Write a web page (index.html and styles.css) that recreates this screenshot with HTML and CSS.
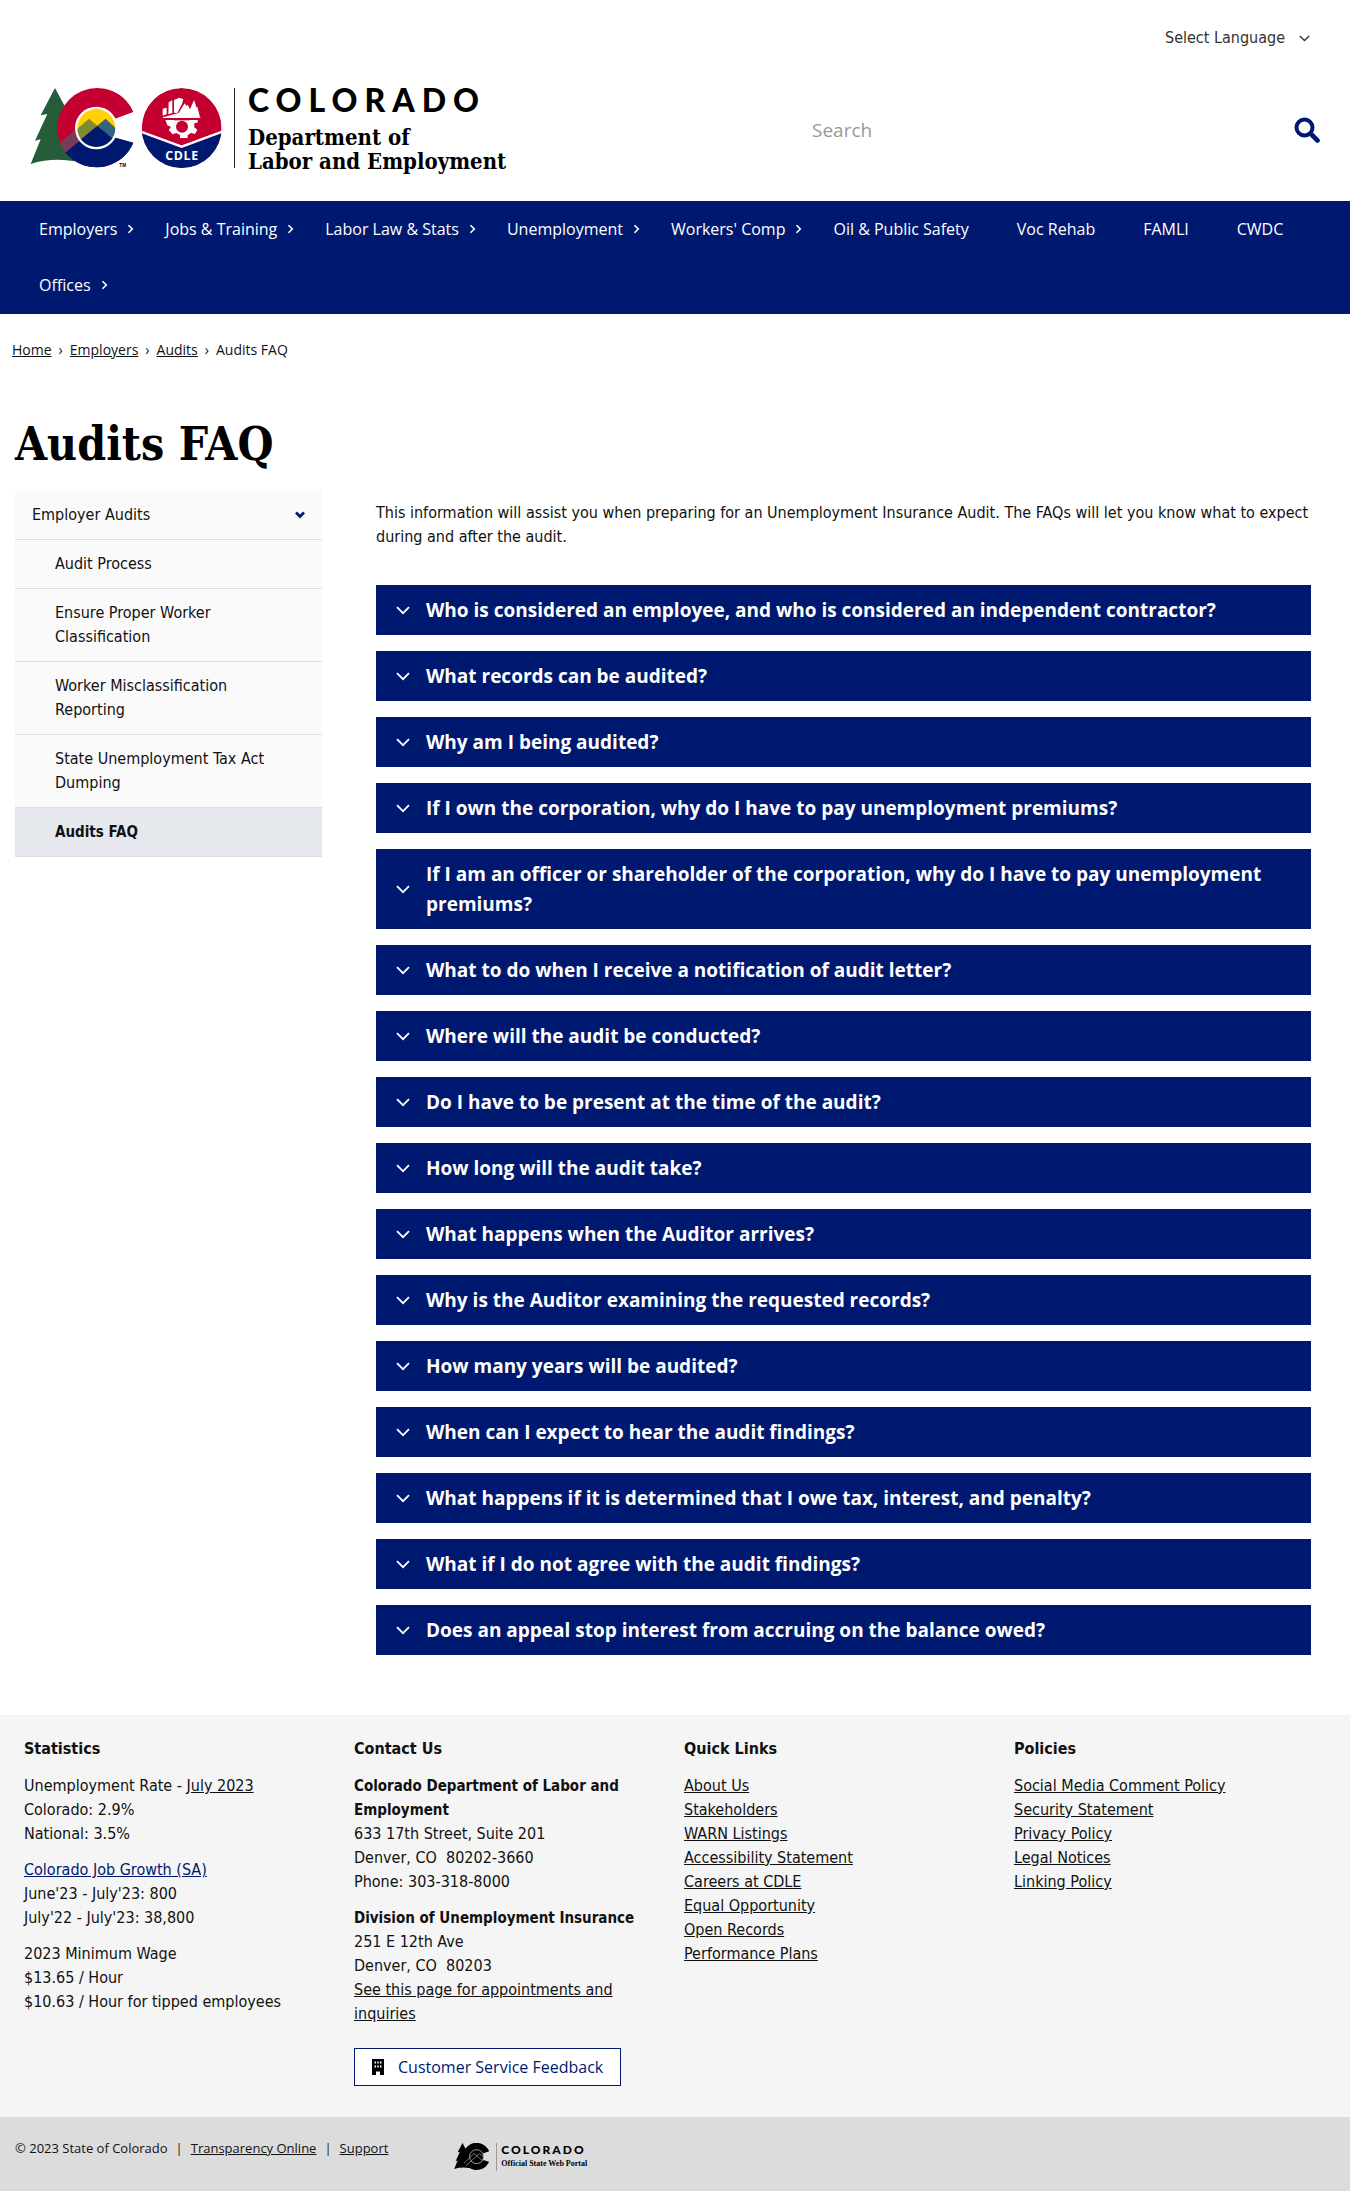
FILE: index.html
```html
<!DOCTYPE html>
<html lang="en">
<head>
<meta charset="utf-8">
<meta name="viewport" content="width=device-width, initial-scale=1">
<title>Audits FAQ | Department of Labor &amp; Employment</title>
<link rel="stylesheet" href="styles.css">
</head>
<body>
<svg class="defs" aria-hidden="true">
  <symbol id="chev-right" viewBox="0 0 7 10"><path d="M1.500 1.200 5.300 5 1.500 8.800" fill="none" stroke="currentColor" stroke-width="1.600"/></symbol>
  <symbol id="chev-down" viewBox="0 0 14 9"><path d="M1 1.200 7 7.200 13 1.200" fill="none" stroke="currentColor" stroke-width="1.800"/></symbol>
</svg>

<header class="site-header">
  <div class="language">
    <select aria-label="Language"><option>Select Language</option><option>Spanish</option></select>
    <svg class="language-icon" viewBox="0 0 14 9" aria-hidden="true"><use href="#chev-down"/></svg>
  </div>
  <div class="masthead">
    <a class="logo" href="#" aria-label="Colorado Department of Labor and Employment">
      <svg class="logo-mark" viewBox="30 24 576 246" aria-hidden="true">
        <defs><clipPath id="c-shape"><path d="M340 96A120 120 0 1 0 340 188L232 158 232 136Z"/></clipPath>
        <clipPath id="sun"><circle cx="229" cy="144" r="57"/></clipPath>
        <clipPath id="badge"><circle cx="485" cy="144" r="120"/></clipPath></defs>
        <path d="M105 24 62 106 82 102 45 182 62 178 32 252Q95 232 165 244L200 150 134 78Z" fill="#245d38"/>
        <g clip-path="url(#c-shape)">
          <circle cx="232" cy="144" r="120" fill="#c3002f"/>
          <path d="M130 222 232 137 360 175V280H130Z" fill="#001970"/>
          <path d="M105 200 180 137 200 165 131 222Z" fill="#7a3a5b"/>
        </g>
        <circle cx="229" cy="144" r="64" fill="#fff"/>
        <g clip-path="url(#sun)">
          <circle cx="229" cy="144" r="57" fill="#ffd100"/>
          <path d="M207 116 160 156V210L232 137Z" fill="#7f8a32"/>
          <path d="M232 137 257 116 295 152V196Z" fill="#35647e"/>
          <path d="M232 137 160 197V210H300V195Z" fill="#001970"/>
        </g>
        <text x="298" y="262" class="tm">TM</text>
        <g clip-path="url(#badge)">
          <circle cx="485" cy="144" r="120" fill="#c3002f"/>
          <path d="M360 156 485 200 610 156V280H360Z" fill="#001970"/>
          <path d="M360 154 485 200 610 154" fill="none" stroke="#fff" stroke-width="7"/>
        </g>
        <g fill="#fff">
          <path d="M428 86 440 83V103L428 107ZM446 67 457 61V99L445 103ZM462 60 478 53 490 58 486 72 472 99 462 98Z"/>
          <path d="M476 99 494 70 500 78 503 74 510 88 522 60 530 83 532 80 540 112H429Z"/>
          <rect x="429" y="111" width="112" height="3"/>
          <path d="M436 120H533V128L523 129V142L532 149 525 162 513 159 503 165V174H480V165L469 159 458 163 446 150 453 141 442 136Z"/>
        </g>
        <circle cx="486" cy="140" r="18" fill="#c3002f"/><path d="M462 114H508V121H462Z" fill="#c3002f"/>
        <text x="486" y="240" text-anchor="middle" class="cdle">CDLE</text>
      </svg>
      <span class="logo-text">
        <span class="logo-state">COLORADO</span>
        <span class="logo-dept">Department of<br>Labor and Employment</span>
      </span>
    </a>
    <form class="search">
      <input type="search" placeholder="Search" aria-label="Search">
      <button type="button" aria-label="Search"><svg viewBox="0 0 26 26" aria-hidden="true"><circle cx="10.500" cy="10.500" r="8" fill="none" stroke="currentColor" stroke-width="4"/><path d="M16.500 16.500 23.500 23.500" stroke="currentColor" stroke-width="4.600" stroke-linecap="round"/></svg></button>
    </form>
  </div>
</header>

<nav class="main-nav" aria-label="Main">
  <a class="sub" href="#">Employers<svg aria-hidden="true"><use href="#chev-right"/></svg></a>
  <a class="sub" href="#">Jobs &amp; Training<svg aria-hidden="true"><use href="#chev-right"/></svg></a>
  <a class="sub" href="#">Labor Law &amp; Stats<svg aria-hidden="true"><use href="#chev-right"/></svg></a>
  <a class="sub" href="#">Unemployment<svg aria-hidden="true"><use href="#chev-right"/></svg></a>
  <a class="sub" href="#">Workers' Comp<svg aria-hidden="true"><use href="#chev-right"/></svg></a>
  <a href="#">Oil &amp; Public Safety</a>
  <a href="#">Voc Rehab</a>
  <a href="#">FAMLI</a>
  <a href="#">CWDC</a>
  <a class="sub" href="#">Offices<svg aria-hidden="true"><use href="#chev-right"/></svg></a>
</nav>

<nav class="breadcrumb" aria-label="Breadcrumb">
  <a href="#">Home</a><span>›</span><a href="#">Employers</a><span>›</span><a href="#">Audits</a><span>›</span><b>Audits FAQ</b>
</nav>

<div class="page">
  <h1>Audits FAQ</h1>
  <div class="columns">
    <nav class="side-nav" aria-label="Section">
      <a class="parent" href="#">Employer Audits<svg viewBox="0 0 10 8" aria-hidden="true"><path d="M1 1.500 5 5.500 9 1.500" fill="none" stroke="#001970" stroke-width="2.800"/></svg></a>
      <a href="#">Audit Process</a>
      <a href="#">Ensure Proper Worker Classification</a>
      <a href="#">Worker Misclassification Reporting</a>
      <a href="#">State Unemployment Tax Act Dumping</a>
      <a class="active" href="#" aria-current="page">Audits FAQ</a>
    </nav>
    <main>
      <p class="intro">This information will assist you when preparing for an Unemployment Insurance Audit. The FAQs will let you know what to expect during and after the audit.</p>
      <div class="accordion">
        <button type="button"><svg aria-hidden="true"><use href="#chev-down"/></svg>Who is considered an employee, and who is considered an independent contractor?</button>
        <button type="button"><svg aria-hidden="true"><use href="#chev-down"/></svg>What records can be audited?</button>
        <button type="button"><svg aria-hidden="true"><use href="#chev-down"/></svg>Why am I being audited?</button>
        <button type="button"><svg aria-hidden="true"><use href="#chev-down"/></svg>If I own the corporation, why do I have to pay unemployment premiums?</button>
        <button type="button"><svg aria-hidden="true"><use href="#chev-down"/></svg>If I am an officer or shareholder of the corporation, why do I have to pay unemployment premiums?</button>
        <button type="button"><svg aria-hidden="true"><use href="#chev-down"/></svg>What to do when I receive a notification of audit letter?</button>
        <button type="button"><svg aria-hidden="true"><use href="#chev-down"/></svg>Where will the audit be conducted?</button>
        <button type="button"><svg aria-hidden="true"><use href="#chev-down"/></svg>Do I have to be present at the time of the audit?</button>
        <button type="button"><svg aria-hidden="true"><use href="#chev-down"/></svg>How long will the audit take?</button>
        <button type="button"><svg aria-hidden="true"><use href="#chev-down"/></svg>What happens when the Auditor arrives?</button>
        <button type="button"><svg aria-hidden="true"><use href="#chev-down"/></svg>Why is the Auditor examining the requested records?</button>
        <button type="button"><svg aria-hidden="true"><use href="#chev-down"/></svg>How many years will be audited?</button>
        <button type="button"><svg aria-hidden="true"><use href="#chev-down"/></svg>When can I expect to hear the audit findings?</button>
        <button type="button"><svg aria-hidden="true"><use href="#chev-down"/></svg>What happens if it is determined that I owe tax, interest, and penalty?</button>
        <button type="button"><svg aria-hidden="true"><use href="#chev-down"/></svg>What if I do not agree with the audit findings?</button>
        <button type="button"><svg aria-hidden="true"><use href="#chev-down"/></svg>Does an appeal stop interest from accruing on the balance owed?</button>
      </div>
    </main>
  </div>
</div>

<footer>
  <div class="footer-columns">
    <section>
      <h2>Statistics</h2>
      <p>Unemployment Rate - <a href="#">July 2023</a><br>Colorado: 2.9%<br>National: 3.5%</p>
      <p><a class="blue" href="#">Colorado Job Growth (SA)</a><br>June'23 - July'23: 800<br>July'22 - July'23: 38,800</p>
      <p>2023 Minimum Wage<br>$13.65 / Hour<br>$10.63 / Hour for tipped employees</p>
    </section>
    <section>
      <h2>Contact Us</h2>
      <p><strong>Colorado Department of Labor and Employment</strong><br>633 17th Street, Suite 201<br>Denver, CO&nbsp; 80202-3660<br>Phone: 303-318-8000</p>
      <p><strong>Division of Unemployment Insurance</strong><br>251 E 12th Ave<br>Denver, CO&nbsp; 80203<br><a href="#">See this page for appointments and inquiries</a></p>
      <a class="feedback" href="#"><svg viewBox="0 0 14 16" aria-hidden="true"><path fill="#000" fill-rule="evenodd" d="M1 0H13V16H9V12.500H5V16H1ZM3.500 2.500V4.500H5V2.500ZM6.300 2.500V4.500H7.800V2.500ZM9 2.500V4.500H10.500V2.500ZM3.500 6.500V8.500H5V6.500ZM6.300 6.500V8.500H7.800V6.500ZM9 6.500V8.500H10.500V6.500Z"/></svg>Customer Service Feedback</a>
    </section>
    <section>
      <h2>Quick Links</h2>
      <ul>
        <li><a href="#">About Us</a></li>
        <li><a href="#">Stakeholders</a></li>
        <li><a href="#">WARN Listings</a></li>
        <li><a href="#">Accessibility Statement</a></li>
        <li><a href="#">Careers at CDLE</a></li>
        <li><a href="#">Equal Opportunity</a></li>
        <li><a href="#">Open Records</a></li>
        <li><a href="#">Performance Plans</a></li>
      </ul>
    </section>
    <section>
      <h2>Policies</h2>
      <ul>
        <li><a href="#">Social Media Comment Policy</a></li>
        <li><a href="#">Security Statement</a></li>
        <li><a href="#">Privacy Policy</a></li>
        <li><a href="#">Legal Notices</a></li>
        <li><a href="#">Linking Policy</a></li>
      </ul>
    </section>
  </div>
  <div class="legal">
    <p>© 2023 State of Colorado<span>|</span><a href="#">Transparency Online</a><span>|</span><a href="#">Support</a></p>
    <a class="portal" href="#" aria-label="Colorado Official State Web Portal">
      <svg viewBox="30 24 318 246" aria-hidden="true">
        <path d="M105 24 62 106 82 102 45 182 62 178 32 252Q95 232 165 244L200 150 134 78Z"/>
        <path d="M340 96A120 120 0 1 0 340 188L232 158 232 136Z"/>
        <circle cx="229" cy="144" r="62" stroke="#bbb" stroke-width="7"/>
        <path d="M118 202 207 116 232 137 257 116 285 144M135 224 232 137 280 180" fill="none" stroke="#aaa" stroke-width="6"/>
      </svg>
      <span class="portal-text"><span class="portal-state">COLORADO</span><span class="portal-name">Official State Web Portal</span></span>
    </a>
  </div>
</footer>
</body>
</html>
```
FILE: styles.css
```css
* { box-sizing: border-box; }

body {
  margin: 0;
  background: #fff;
  color: #111;
  font: 16px/24px "DejaVu Sans Condensed", "Open Sans", sans-serif;
}

h1, h2, p, ul { margin: 0; padding: 0; }
ul { list-style: none; }
a { color: inherit; }
svg { display: block; flex: none; }
.defs { position: absolute; width: 0; height: 0; }

/* Header */
.site-header { padding: 24px 30px 31px; }
.language { display: flex; justify-content: flex-end; align-items: center; gap: 13px; padding-right: 10px; }
.language select {
  height: 28px;
  padding: 0;
  border: 0;
  background: none;
  color: #333;
  font: inherit;
  appearance: none;
}
.language-icon { width: 11px; height: 7px; color: #333; }
.masthead { display: flex; justify-content: space-between; align-items: flex-start; margin-top: 36px; }
.logo { display: flex; color: #000; text-decoration: none; }
.logo-mark { width: 192px; height: 82px; }
.tm { font: 700 14px "Liberation Sans", sans-serif; }
.cdle { font: 700 37px "Open Sans", sans-serif; fill: #fff; letter-spacing: 2px; }
.logo-text {
  display: flex;
  flex-direction: column;
  gap: 13px;
  height: 80px;
  margin-left: 12px;
  padding-left: 13px;
  border-left: 1px solid #222;
  white-space: nowrap;
}
.logo-state { font: 900 32px/24px Lato, sans-serif; letter-spacing: 7px; }
.logo-dept { font: 700 22px/24px "DejaVu Serif Condensed", "DejaVu Serif", serif; }
.search { display: flex; align-items: center; justify-content: space-between; width: 508px; margin-top: 24px; }
.search input {
  flex: 1;
  height: 36px;
  padding: 0;
  border: 0;
  background: none;
  font: 19px "Open Sans", sans-serif;
}
.search input::placeholder { color: #999; opacity: 1; }
.search button { padding: 0; border: 0; background: none; color: #001970; }
.search button svg { width: 26px; height: 26px; }

/* Main navigation */
.main-nav { display: flex; flex-wrap: wrap; padding: 0 15px 1px; background: #001970; }
.main-nav a {
  display: flex;
  align-items: center;
  padding: 0 24px;
  color: #fff;
  font: 16px/56px "Open Sans", sans-serif;
  text-decoration: none;
}
.main-nav .sub { gap: 10px; padding-right: 7px; }
.main-nav svg { width: 7px; height: 10px; }

.breadcrumb { display: flex; gap: 7px; padding: 26px 12px 0; font: 14px/20px "Open Sans", sans-serif; }
.breadcrumb b { font-weight: 400; }

/* Page body */
.page { padding: 56px 39px 60px 15px; }
h1 { color: #000; font: 700 46px/56px "DejaVu Serif Condensed", "DejaVu Serif", serif; }
.columns { display: grid; grid-template-columns: 307px 1fr; gap: 54px; align-items: start; margin-top: 19px; }

.side-nav a {
  display: block;
  padding: 12px 40px;
  border-bottom: 1px solid #ddd;
  background: #fafafa;
  text-decoration: none;
}
.side-nav .parent { display: flex; justify-content: space-between; align-items: center; padding: 12px 17px; }
.side-nav .parent svg { width: 10px; height: 8px; }
.side-nav .active { background: #e5e8ed; font-size: 15px; font-weight: 700; }

.intro { padding-top: 10px; }
.accordion { display: flex; flex-direction: column; gap: 16px; margin-top: 36px; }
.accordion button {
  display: flex;
  align-items: center;
  gap: 16px;
  padding: 10px 20px;
  border: 0;
  background: #001970;
  color: #fff;
  font: 700 19px/30px "Open Sans", sans-serif;
  text-align: left;
}
.accordion svg { width: 14px; height: 9px; }

/* Footer */
.footer-columns {
  display: grid;
  grid-template-columns: repeat(4, 1fr);
  column-gap: 48px;
  padding: 22px 54px 31px 24px;
  background: #f5f5f5;
}
h2 { margin-bottom: 13px; font-size: 16px; line-height: 24px; }
section p + p { margin-top: 12px; }
strong { font-size: 15px; }
.blue { color: #001970; }
.feedback {
  display: inline-flex;
  align-items: center;
  gap: 13px;
  height: 38px;
  margin-top: 22px;
  padding: 0 17px 0 16px;
  border: 1px solid #001970;
  background: #fff;
  color: #001970;
  font: 16px "Open Sans", sans-serif;
  text-decoration: none;
  white-space: nowrap;
}
.feedback svg { width: 14px; height: 16px; }

.legal {
  display: flex;
  align-items: flex-start;
  gap: 66px;
  padding: 21px 15px 20px;
  background: #dcdcdc;
  font: 13px/20px "Open Sans", sans-serif;
}
.legal p span { margin: 0 8px; }
.portal { display: flex; gap: 6px; margin: 5px 0 0; color: #000; text-decoration: none; }
.portal svg { width: 36px; height: 28px; }
.portal-text { display: flex; flex-direction: column; padding-left: 4px; border-left: 1px solid #999; }
.portal-state { font: 900 12px/14px Lato, sans-serif; letter-spacing: 2px; }
.portal-name { font: 700 8px/14px "Liberation Serif", serif; }
```
